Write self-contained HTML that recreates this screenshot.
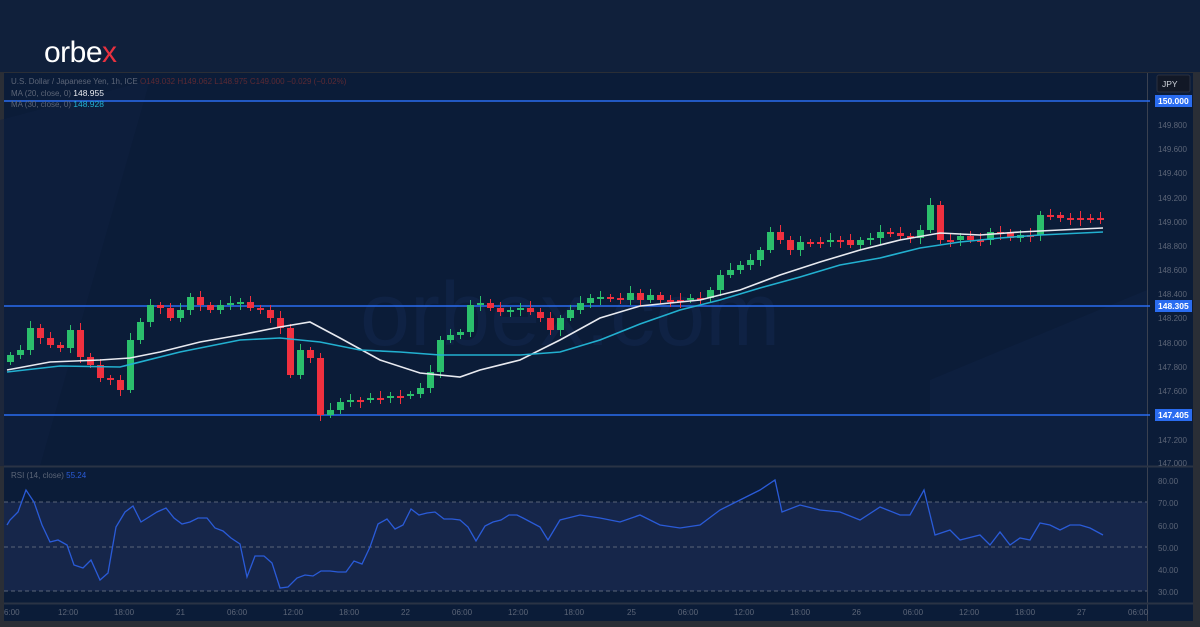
<!DOCTYPE html>
<html><head><meta charset="utf-8"><style>
html,body{margin:0;padding:0;width:1200px;height:627px;overflow:hidden;background:#10203b;font-family:"Liberation Sans",sans-serif}
</style></head><body>
<svg id="s" width="1200" height="627" xmlns="http://www.w3.org/2000/svg" style="position:absolute;left:0;top:0">
<rect width="1200" height="627" fill="#10203b"/>
<rect x="0" y="72" width="1200" height="555" fill="#2a2e36"/>
<rect x="4" y="73" width="1143" height="393" fill="#0b1c38"/>
<rect x="4" y="467" width="1143" height="136" fill="#0b1c38"/>
<rect x="1148" y="73" width="45" height="530" fill="#0b1c38"/>
<rect x="4" y="604" width="1189" height="17" fill="#0b1c38"/>
<polygon points="930,380 1147,290 1147,466 930,466" fill="#0f2242" opacity="0.6"/>
<polygon points="0,120 150,80 40,466 0,466" fill="#0f2040" opacity="0.5"/>
<text x="360" y="345" font-size="90" fill="#0f2244" font-family="Liberation Sans">orbex.com</text>
<rect x="4" y="502" width="1143" height="89" fill="#16264a"/>
<g stroke="#5a6478" stroke-dasharray="4,3" stroke-width="1"><line x1="4" y1="502" x2="1147" y2="502"/><line x1="4" y1="547" x2="1147" y2="547"/><line x1="4" y1="591" x2="1147" y2="591"/></g>
<line x1="1147.5" y1="73" x2="1147.5" y2="621" stroke="#3a4150"/>
<line x1="4" y1="466.5" x2="1193" y2="466.5" stroke="#2a3345" stroke-width="2"/>
<line x1="4" y1="603.5" x2="1193" y2="603.5" stroke="#2a3345" stroke-width="2"/>
<g stroke="#2a6cf0" stroke-width="1.5"><line x1="4" y1="101" x2="1150" y2="101"/><line x1="4" y1="306" x2="1150" y2="306"/><line x1="4" y1="415" x2="1150" y2="415"/></g>
<g id="c"></g>
<polyline fill="none" stroke="#e8eaf0" stroke-width="1.6" points="7,370 50,362 100,360 130,358 160,352 200,342 240,335 280,327 310,322 340,338 380,360 420,373 460,377 480,370 520,360 560,340 600,318 640,306 700,300 740,290 780,275 820,262 860,250 900,240 940,233 980,235 1020,232 1060,230 1103,228"/>
<polyline fill="none" stroke="#22b0d0" stroke-width="1.6" points="7,372 60,366 120,367 180,352 240,340 280,338 320,342 360,350 400,352 440,355 520,355 560,352 600,340 640,324 680,310 720,300 760,288 800,277 840,265 880,258 920,248 960,242 1000,238 1040,235 1103,232"/>
<polyline fill="none" stroke="#2a5bd8" stroke-width="1.3" points="7,525 10,520 18,512 26,490 34,502 42,525 50,542 58,540 67,545 74,565 83,568 91,560 100,580 108,573 116,527 125,512 133,506 141,522 149,517 157,512 166,508 174,518 182,524 190,522 198,518 207,518 215,528 223,531 231,538 240,544 247,577 255,556 264,556 272,563 280,588 288,587 297,578 305,575 313,576 321,571 330,571 338,572 346,572 354,561 362,564 370,547 378,524 387,519 395,529 403,525 411,509 419,515 427,513 435,512 444,519 452,519 460,520 468,527 476,541 485,526 493,522 501,520 509,515 517,515 523,518 540,527 548,540 560,520 580,515 600,518 620,522 640,515 660,525 680,528 700,525 720,510 740,500 760,490 775,480 782,512 800,505 820,510 840,512 860,520 880,507 900,515 910,515 924,490 935,535 950,530 960,540 980,535 990,545 1000,532 1010,545 1020,538 1030,540 1040,523 1050,525 1060,530 1070,525 1080,525 1090,528 1103,535"/>
<g font-size="8" fill="#5c6577" font-family="Liberation Sans">
<text x="1158" y="128">149.800</text><text x="1158" y="152">149.600</text><text x="1158" y="176">149.400</text><text x="1158" y="201">149.200</text><text x="1158" y="225">149.000</text><text x="1158" y="249">148.800</text><text x="1158" y="273">148.600</text><text x="1158" y="297">148.400</text><text x="1158" y="321">148.200</text><text x="1158" y="346">148.000</text><text x="1158" y="370">147.800</text><text x="1158" y="394">147.600</text><text x="1158" y="443">147.200</text><text x="1158" y="466">147.000</text>
<text x="1158" y="484">80.00</text><text x="1158" y="506">70.00</text><text x="1158" y="529">60.00</text><text x="1158" y="551">50.00</text><text x="1158" y="573">40.00</text><text x="1158" y="595">30.00</text>
<text x="4" y="615">6:00</text><text x="58" y="615">12:00</text><text x="114" y="615">18:00</text><text x="176" y="615">21</text><text x="227" y="615">06:00</text><text x="283" y="615">12:00</text><text x="339" y="615">18:00</text><text x="401" y="615">22</text><text x="452" y="615">06:00</text><text x="508" y="615">12:00</text><text x="564" y="615">18:00</text><text x="627" y="615">25</text><text x="678" y="615">06:00</text><text x="734" y="615">12:00</text><text x="790" y="615">18:00</text><text x="852" y="615">26</text><text x="903" y="615">06:00</text><text x="959" y="615">12:00</text><text x="1015" y="615">18:00</text><text x="1077" y="615">27</text><text x="1128" y="615">06:00</text>
<text x="11" y="84">U.S. Dollar / Japanese Yen, 1h, ICE  <tspan fill="#5c2a34">O149.032  H149.062  L148.975  C149.000  −0.029 (−0.02%)</tspan></text>
<text x="11" y="96">MA (20, close, 0)  <tspan fill="#e8eaf0" font-size="8.5">148.955</tspan></text>
<text x="11" y="107">MA (30, close, 0)  <tspan fill="#22b0d0" font-size="8.5">148.928</tspan></text>
<text x="11" y="478">RSI (14, close)  <tspan fill="#2a5bd8">55.24</tspan></text>
</g>
<rect x="1157" y="75" width="33" height="17" rx="2" fill="#121826" stroke="#2a3040"/>
<text x="1162" y="87" font-size="8.5" fill="#d0d4dc">JPY</text>
<g font-size="8.5" fill="#fff" font-weight="bold"><rect x="1155" y="95" width="37" height="12" fill="#2a6cf0"/><text x="1158" y="104">150.000</text>
<rect x="1155" y="300" width="37" height="12" fill="#2a6cf0"/><text x="1158" y="309">148.305</text>
<rect x="1155" y="409" width="37" height="12" fill="#2a6cf0"/><text x="1158" y="418">147.405</text></g>
<text x="44" y="62" font-size="30" fill="#fff" font-family="Liberation Sans" letter-spacing="-0.5">orbe<tspan fill="#e8313f">x</tspan></text>
</svg>
<script>
var ys=[355,350,328,338,345,348,330,357,365,378,380,390,340,322,305,308,318,310,297,305,310,305,303,302,308,310,318,328,375,350,358,415,410,402,400,400,398,398,396,396,394,388,372,340,335,332,305,303,308,312,310,308,312,318,330,318,310,303,298,297,298,300,293,300,295,300,300,300,298,298,290,275,270,265,260,250,232,240,250,242,242,242,240,240,245,240,238,232,233,236,238,230,205,240,240,236,240,240,232,232,238,235,235,215,215,218,218,218,218,220];
var g=document.getElementById('c'),h='',prev=362;
for(var i=0;i<ys.length;i++){var x=7+i*10,o=prev,c=ys[i];var up=c<o;var col=up?'#2bbf6c':'#f0303f';
var t=Math.min(o,c),b=Math.max(o,c);if(b-t<2){b=t+2;}
var wt=t-3-(i*7%5),wb=b+3+(i*5%4);
h+='<line x1="'+(x+3.5)+'" y1="'+wt+'" x2="'+(x+3.5)+'" y2="'+wb+'" stroke="'+col+'" stroke-width="1"/>';
h+='<rect x="'+x+'" y="'+t+'" width="7" height="'+(b-t)+'" fill="'+col+'"/>';prev=c;}
g.innerHTML=h;
</script>
</body></html>
